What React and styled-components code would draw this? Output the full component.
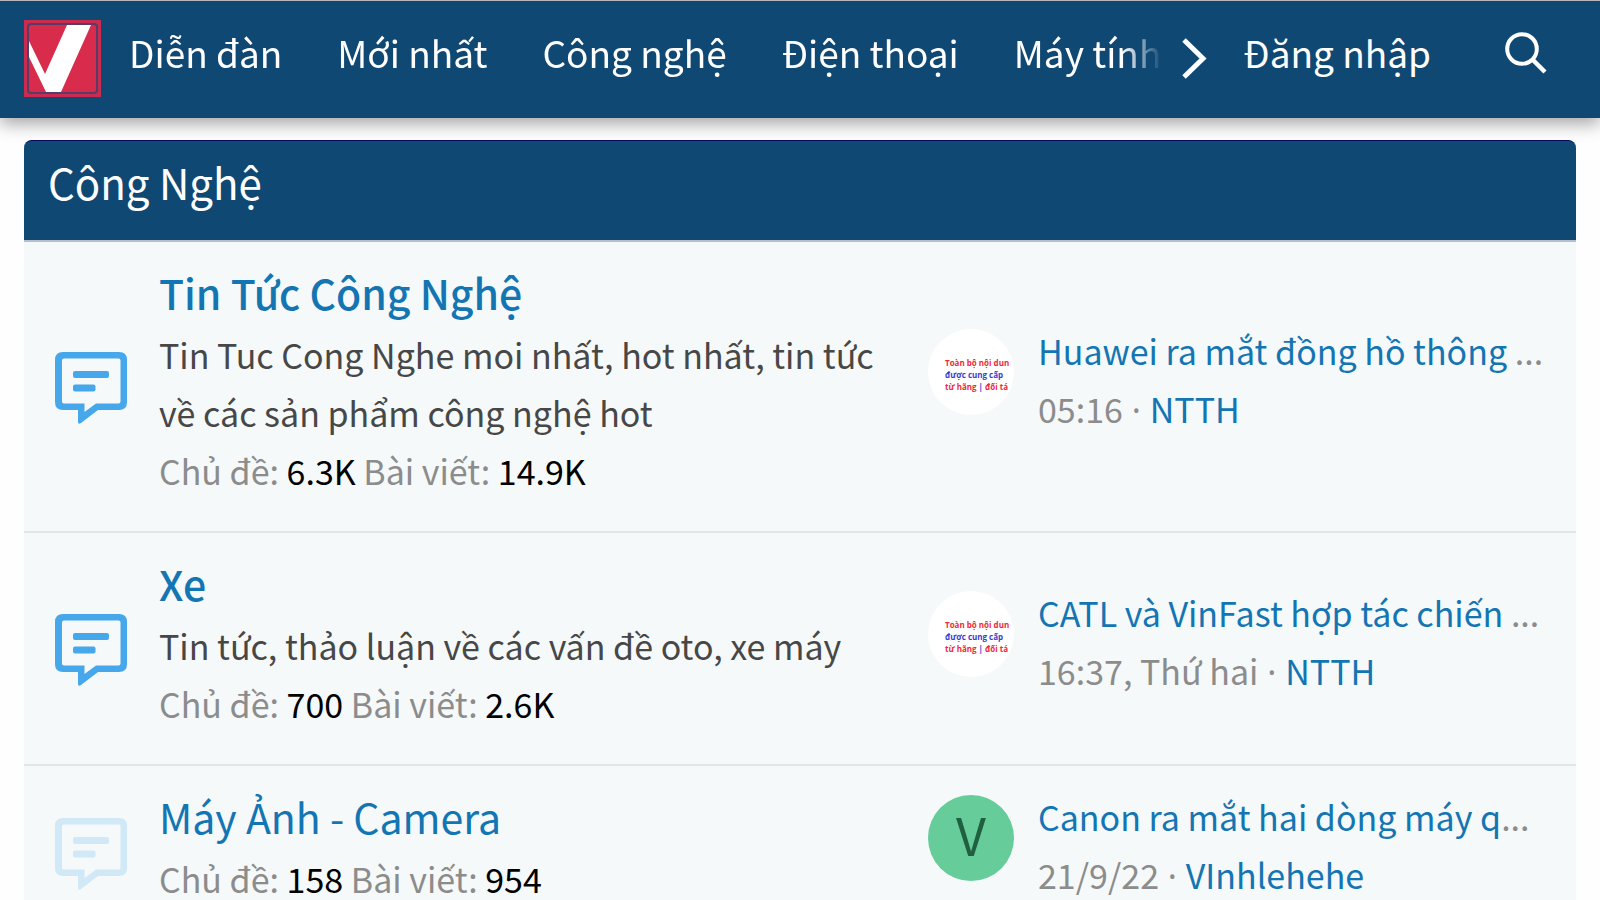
import React from "react"
import styled, { createGlobalStyle } from "styled-components"

const GlobalStyle = createGlobalStyle`
  * { box-sizing: border-box; }
  body {
    margin: 0;
    background: #fefefe;
    color: #8c8c8c;
    font-family: "Noto Sans CJK JP", "Noto Sans", sans-serif;
    font-size: 34px;
    line-height: 58px;
  }
  a { color: #1475b3; text-decoration: none; }
`

const Header = styled.header`
  display: flex;
  align-items: center;
  height: 118px;
  padding: 0 24px 2px;
  background: #104874;
  border-top: 1px solid #b3b5b8;
  box-shadow: 0 6px 16px rgba(0, 0, 0, 0.35);
`

const LogoLink = styled.a`
  display: flex;
  flex: none;
`

const Links = styled.nav`
  display: flex;
  flex: 1;
  min-width: 0;
  gap: 55px;
  margin-left: 28px;
  overflow: hidden;
  mask-image: linear-gradient(to right, #000 calc(100% - 40px), transparent);
`

const NavLink = styled.a`
  flex: none;
  color: #fff;
  font-size: 37px;
  line-height: 58px;
  padding-bottom: 14px;
  white-space: nowrap;
`

const IconButton = styled.button`
  display: flex;
  flex: none;
  padding: 0;
  border: 0;
  background: none;
  color: #fff;
  cursor: pointer;
  margin: ${(props) => props.$margin};
`

const Block = styled.section`
  margin: 22px 24px 0;
  background: #f5f9fa;
`

const BlockTitle = styled.h2`
  height: 102px;
  margin: 0;
  padding: 12px 24px;
  border-top: 1px solid #03075e;
  border-bottom: 2px solid #b4bfcb;
  border-radius: 8px 8px 0 0;
  background: #104874;
  color: #fff;
  font-size: 42px;
  font-weight: 400;
`

const Node = styled.article`
  display: grid;
  grid-template-columns: 135px minmax(0, 1fr) 648px;
  align-items: center;
  border-bottom: 2px solid #e3e6e6;
`

const NodeIcon = styled.div`
  display: flex;
  padding: 2px 0 0 31px;
  color: #47a7eb;
  opacity: ${(props) => (props.$read ? 0.2 : 1)};
`

const NodeMain = styled.div`
  padding: 19px 24px 31px 0;
`

const NodeTitle = styled.h3`
  margin: 0 0 3px;
  font-size: 41px;
  line-height: 62px;
  font-weight: ${(props) => (props.$read ? 400 : 500)};
`

const Description = styled.p`
  margin: 0;
  color: #474747;
`

const Stats = styled.div`
  b { color: #000; font-weight: 400; }
`

const NodeExtra = styled.div`
  display: flex;
  align-items: flex-start;
  gap: 24px;
  padding-bottom: 14px;
`

const Latest = styled.div`
  min-width: 0;
  white-space: nowrap;
`

const Avatar = styled.a`
  flex: none;
  width: 86px;
  height: 86px;
  margin-top: 7px;
  border-radius: 50%;
  overflow: hidden;
  background: ${(props) => (props.$letter ? "#66cc99" : "#fff")};
  color: ${(props) => (props.$letter ? "#206040" : "#f0283c")};
  font-size: ${(props) => (props.$letter ? "52px" : "8px")};
  line-height: ${(props) => (props.$letter ? "78px" : "12px")};
  font-weight: ${(props) => (props.$letter ? 400 : 700)};
  font-family: ${(props) => (props.$letter ? "inherit" : '"Open Sans", sans-serif')};
  text-align: ${(props) => (props.$letter ? "center" : "left")};
  padding: ${(props) => (props.$letter ? "0" : "28px 0 0 17px")};
  white-space: nowrap;
`

const Blue = styled.span`
  color: #3a40d0;
`

const Dot = styled.span`
  font-family: "Noto Sans", sans-serif;
  line-height: 1;
  white-space: pre;
`

const Line = styled.div``

const Logo = () => (
  <svg width="77" height="77" viewBox="0 0 77 77">
    <rect width="77" height="77" fill="#c92c4f" />
    <rect x="4" y="4" width="69" height="69" rx="3" fill="#d92b4b" stroke="#5a3a66" strokeWidth="2" />
    <path d="M5 21 L5 37 L22 72 H37 L67 5 H43 L21 54 Z" fill="#fff" />
  </svg>
)

const ChevronIcon = () => (
  <svg width="25" height="41" viewBox="0 0 25 41" fill="none" stroke="currentColor" strokeWidth="5">
    <path d="M2 2 L21 20.500 L2 39" />
  </svg>
)

const SearchIcon = () => (
  <svg width="42" height="42" viewBox="0 0 42 42" fill="none" stroke="currentColor" strokeWidth="4">
    <circle cx="17" cy="17" r="14.800" />
    <path d="M27.500 27.500 L40 40" strokeWidth="4.500" />
  </svg>
)

const BubbleIcon = () => (
  <svg width="72" height="72" viewBox="0 0 72 72" fill="currentColor">
    <path
      fillRule="evenodd"
      d="M8 0 H64 Q72 0 72 8 V50 Q72 58 64 58 H43 L26 71 Q23 73 23 70 V58 H8 Q0 58 0 50 V8 Q0 0 8 0 Z M9 6.500 Q7 6.500 7 8.500 V49.500 Q7 51.500 9 51.500 H29.500 V60 L41 51.500 H63.500 Q65.500 51.500 65.500 49.500 V8.500 Q65.500 6.500 63.500 6.500 Z"
    />
    <rect x="18" y="19" width="36" height="7" rx="2" />
    <rect x="18" y="32.500" width="22.500" height="7" rx="2" />
  </svg>
)

const menu = ["Diễn đàn", "Mới nhất", "Công nghệ", "Điện thoại", "Máy tính"]

const nodes = [
  {
    title: "Tin Tức Công Nghệ",
    description: "Tin Tuc Cong Nghe moi nhất, hot nhất, tin tức về các sản phẩm công nghệ hot",
    threads: "6.3K",
    posts: "14.9K",
    latest: "Huawei ra mắt đồng hồ thông",
    more: " ...",
    date: "05:16",
    user: "NTTH",
  },
  {
    title: "Xe",
    description: "Tin tức, thảo luận về các vấn đề oto, xe máy",
    threads: "700",
    posts: "2.6K",
    latest: "CATL và VinFast hợp tác chiến",
    more: " ...",
    date: "16:37, Thứ hai",
    user: "NTTH",
  },
  {
    title: "Máy Ảnh - Camera",
    threads: "158",
    posts: "954",
    latest: "Canon ra mắt hai dòng máy q",
    more: "...",
    date: "21/9/22",
    user: "VInhlehehe",
    letter: "V",
    read: true,
  },
]

const UserAvatar = ({ letter, user }) => (
  <Avatar href="#" $letter={letter} aria-label={user}>
    {letter || (
      <>
        <Line>Toàn bộ nội dun</Line>
        <Line><Blue>được cung cấp</Blue></Line>
        <Line>từ hãng <Blue>|</Blue> đối tá</Line>
      </>
    )}
  </Avatar>
)

const ForumNode = (props) => {
  const { title, description, threads, posts, latest, more, date, user, letter, read } = props.node

  return (
    <Node>
      <NodeIcon $read={read}><BubbleIcon /></NodeIcon>
      <NodeMain>
        <NodeTitle $read={read}><a href="#">{title}</a></NodeTitle>
        {description && <Description>{description}</Description>}
        <Stats>Chủ đề: <b>{threads}</b> Bài viết: <b>{posts}</b></Stats>
      </NodeMain>
      <NodeExtra>
        <UserAvatar letter={letter} user={user} />
        <Latest>
          <Line><a href="#">{latest}</a>{more}</Line>
          <Line>{date}<Dot> · </Dot><a href="#">{user}</a></Line>
        </Latest>
      </NodeExtra>
    </Node>
  )
}

const App = () => (
  <>
    <GlobalStyle />
    <Header>
      <LogoLink href="#" aria-label="Trang chủ"><Logo /></LogoLink>
      <Links>
        {menu.map((item) => <NavLink href="#" key={item}>{item}</NavLink>)}
      </Links>
      <IconButton aria-label="Tiếp" $margin="0 36px 0 20px"><ChevronIcon /></IconButton>
      <NavLink href="#">Đăng nhập</NavLink>
      <IconButton aria-label="Tìm kiếm" $margin="0 29px 12px 74px"><SearchIcon /></IconButton>
    </Header>
    <main>
      <Block>
        <BlockTitle>Công Nghệ</BlockTitle>
        {nodes.map((node) => <ForumNode key={node.title} node={node} />)}
      </Block>
    </main>
  </>
)

export default App
